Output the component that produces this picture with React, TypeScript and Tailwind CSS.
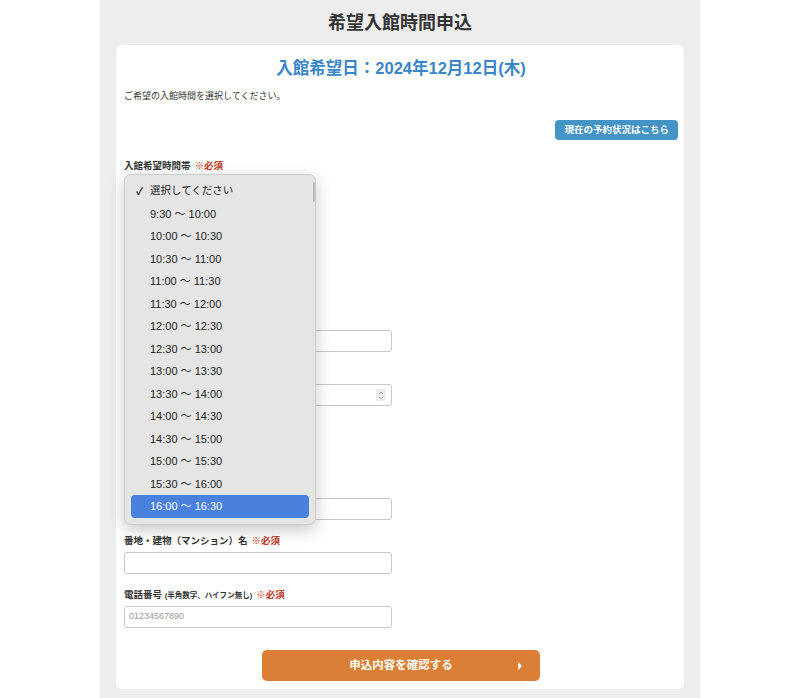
import React from 'react'

const slots = [
  '9:30 ～ 10:00',
  '10:00 ～ 10:30',
  '10:30 ～ 11:00',
  '11:00 ～ 11:30',
  '11:30 ～ 12:00',
  '12:00 ～ 12:30',
  '12:30 ～ 13:00',
  '13:00 ～ 13:30',
  '13:30 ～ 14:00',
  '14:00 ～ 14:30',
  '14:30 ～ 15:00',
  '15:00 ～ 15:30',
  '15:30 ～ 16:00',
  '16:00 ～ 16:30',
]

function Required() {
  return <span className="text-[#c0392b] ml-1">※必須</span>
}

function Label({ children }: { children?: React.ReactNode }) {
  return <div className="h-[14px] leading-[14px] text-[9.5px] font-bold text-[#333]">{children}</div>
}

function TextInput({ placeholder, width = 'w-[268px]' }: { placeholder?: string; width?: string }) {
  return (
    <div
      className={`${width} h-[22px] mt-[4px] border border-[#c9c9c9] rounded-[3px] bg-white flex items-center px-[4px] text-[9px] text-[#9a9a9a]`}
    >
      {placeholder}
    </div>
  )
}

export default function App() {
  return (
    <div
      className="min-h-[698px] bg-white flex justify-center"
      style={{ fontFamily: '"Liberation Sans", "Noto Sans CJK JP", sans-serif' }}
    >
      <div className="w-[600px] bg-[#ededed] px-4 pb-[9px]">
        {/* Page title */}
        <h1 className="h-[45px] pt-[2px] flex items-center justify-center text-[18px] font-bold text-[#333]">
          希望入館時間申込
        </h1>

        {/* Card */}
        <div className="bg-white rounded-[6px] pl-2 pr-[6px] pt-[11px] pb-[8px] flex flex-col">
          <h2 className="h-[24px] leading-[24px] text-center text-[16.5px] font-bold text-[#3a86c8]">
            入館希望日：2024年12月12日(木)
          </h2>
          <p className="mt-[9px] h-[14px] leading-[14px] text-[9px] text-[#333]">
            ご希望の入館時間を選択してください。
          </p>

          <button className="self-end mt-[17px] h-[20px] px-[9px] rounded-[4px] bg-[#4594c6] text-white text-[9.5px] font-bold">
            現在の予約状況はこちら
          </button>

          {/* Time slot select */}
          <div className="mt-[19px]">
            <Label>
              入館希望時間帯
              <Required />
            </Label>
            <div className="relative mt-[4px] w-[192px] h-[24px] border border-[#c9c9c9] rounded-[4px] bg-white">
              {/* open menu */}
              <div className="absolute left-[-1px] top-[-4px] z-10 w-[192px] rounded-[7px] bg-[#e5e5e5] border border-[#cdcdcd] shadow-[0_5px_16px_rgba(0,0,0,0.22)] px-[6px] pt-[5px] pb-[6px]">
                <div className="absolute right-0 top-[7px] w-[2px] h-[20px] bg-[#bcbcbc] rounded" />
                <div className="relative h-[22.5px] flex items-center pl-[19px] text-[10.5px] text-[#222]">
                  <span className="absolute left-[5px] text-[10px] font-bold">✓</span>
                  選択してください
                </div>
                {slots.map((s, i) => {
                  const active = i === slots.length - 1
                  return (
                    <div
                      key={s}
                      className={`h-[22.5px] flex items-center pl-[19px] text-[11px] rounded-[4px] ${
                        active ? 'bg-[#4a80de] text-white' : 'text-[#222]'
                      }`}
                    >
                      {s}
                    </div>
                  )
                })}
              </div>
            </div>
          </div>

          {/* Fields hidden behind the open menu */}
          <div className="mt-[14px]">
            <Label />
            <div className="flex gap-[6px]">
              <TextInput width="w-[90px]" />
              <TextInput width="w-[90px]" />
            </div>
          </div>
          <div className="mt-[14px] h-[29px]">
            <Label />
          </div>
          <div className="mt-[14px]">
            <Label />
            <TextInput />
          </div>
          <div className="mt-[14px]">
            <Label />
            <div className="relative w-[268px] h-[22px] mt-[4px] border border-[#c9c9c9] rounded-[3px] bg-white">
              <div className="absolute right-[5px] top-[4px] w-[10px] h-[12px] bg-[#ececec] rounded-[2px] flex items-center justify-center">
                <svg width="6" height="9" viewBox="0 0 6 9" fill="none" stroke="#9a9a9a" strokeWidth="0.9">
                  <path d="M1 3.2L3 1.2L5 3.2" />
                  <path d="M1 5.8L3 7.8L5 5.8" />
                </svg>
              </div>
            </div>
          </div>
          <div className="mt-[14px] h-[46px]">
            <Label />
            <TextInput width="w-[120px]" />
          </div>
          <div className="mt-[14px]">
            <Label />
            <TextInput />
          </div>

          <div className="mt-[14px]">
            <Label>
              番地・建物（マンション）名
              <Required />
            </Label>
            <TextInput />
          </div>

          <div className="mt-[14px]">
            <Label>
              電話番号 <span className="text-[7.5px]">(半角数字、ハイフン無し)</span>
              <Required />
            </Label>
            <TextInput placeholder="01234567890" />
          </div>

          <button className="relative self-center mt-[22px] w-[278px] h-[31px] rounded-[5px] bg-[#dc7f36] text-white text-[11.5px] font-bold flex items-center justify-center">
            申込内容を確認する
            <span className="absolute right-[18px] top-1/2 -translate-y-1/2 w-0 h-0 border-y-[4px] border-y-transparent border-l-[4px] border-l-white" />
          </button>
        </div>
      </div>
    </div>
  )
}
